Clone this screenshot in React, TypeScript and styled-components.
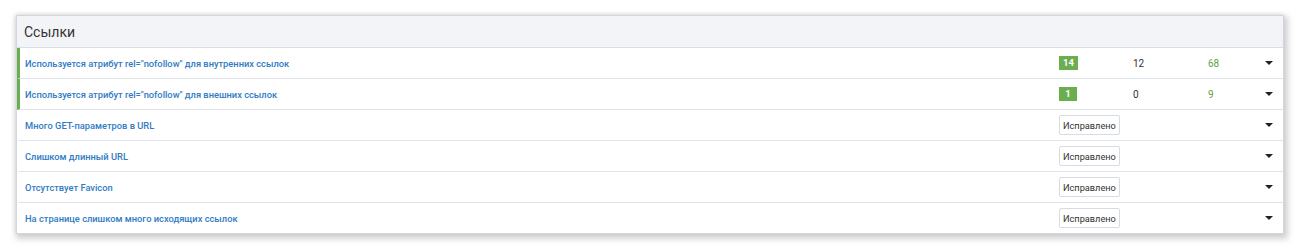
import { ReactElement } from 'react';
import styled, { createGlobalStyle } from 'styled-components';

const GlobalStyle = createGlobalStyle`
  html, body {
    margin: 0;
    background: #ffffff;
    font-family: Roboto, "Liberation Sans", Arial, sans-serif;
  }
`;

interface IssueRow {
  title: string;
  found?: number;
  fixed?: number;
  total?: number;
}

const rows: IssueRow[] = [
  { title: 'Используется атрибут rel="nofollow" для внутренних ссылок', found: 14, fixed: 12, total: 68 },
  { title: 'Используется атрибут rel="nofollow" для внешних ссылок', found: 1, fixed: 0, total: 9 },
  { title: 'Много GET-параметров в URL' },
  { title: 'Слишком длинный URL' },
  { title: 'Отсутствует Favicon' },
  { title: 'На странице слишком много исходящих ссылок' },
];

const Page = styled.div`
  padding: 15px 16px 17px 16px;
`;

const Card = styled.section`
  background: #ffffff;
  border: 1px solid #d3d6dc;
  box-shadow: 2px 3px 6px 2px rgba(0, 0, 0, 0.18), -1px -1px 4px rgba(0, 0, 0, 0.08);
`;

const Header = styled.div`
  height: 31px;
  display: flex;
  align-items: center;
  padding: 0 7px;
  background: #f3f4f8;
  border-bottom: 1px solid #d8dde6;
`;

const Title = styled.h2`
  margin: 0;
  font-size: 14px;
  font-weight: 400;
  color: #333333;
`;

const Row = styled.div<{ $flagged: boolean }>`
  height: 30px;
  display: grid;
  grid-template-columns: 1fr 74px 75px 54px 14px;
  align-items: center;
  padding: 0 7px 0 5px;
  border-left: 3px solid ${({ $flagged }) => ($flagged ? '#6aae50' : 'transparent')};
  border-bottom: 1px solid #dfe3ea;

  &:last-child {
    border-bottom: none;
  }
`;

const Link = styled.a`
  font-size: 9.3px;
  font-weight: 500;
  color: #2f7bc4;
  text-decoration: none;
`;

const Badge = styled.span`
  justify-self: start;
  display: inline-block;
  min-width: 10px;
  padding: 1px 4px;
  background: #6aae50;
  color: #ffffff;
  font-size: 9.5px;
  font-weight: 700;
  line-height: 12px;
  text-align: center;
`;

const Count = styled.span<{ $green?: boolean }>`
  font-size: 10px;
  color: ${({ $green }) => ($green ? '#5f9e46' : '#333333')};
`;

const FixedButton = styled.button`
  grid-column: 2 / 4;
  justify-self: start;
  height: 20px;
  padding: 0 3px;
  background: #ffffff;
  border: 1px solid #d6dbe4;
  border-radius: 2px;
  font-family: Roboto, "Liberation Sans", Arial, sans-serif;
  font-size: 9.2px;
  color: #333333;
`;

const Caret = styled.span`
  grid-column: 5;
  width: 0;
  height: 0;
  justify-self: center;
  border-left: 4px solid transparent;
  border-right: 4px solid transparent;
  border-top: 4px solid #222222;
`;

export default function App(): ReactElement {
  return (
    <Page>
      <GlobalStyle />
      <Card>
        <Header>
          <Title>Ссылки</Title>
        </Header>
        {rows.map((row, i) => {
          const flagged = row.found !== undefined;
          return (
            <Row key={i} $flagged={flagged}>
              <Link href="#">{row.title}</Link>
              {flagged ? (
                <>
                  <Badge>{row.found}</Badge>
                  <Count>{row.fixed}</Count>
                  <Count $green>{row.total}</Count>
                </>
              ) : (
                <FixedButton>Исправлено</FixedButton>
              )}
              <Caret />
            </Row>
          );
        })}
      </Card>
    </Page>
  );
}
